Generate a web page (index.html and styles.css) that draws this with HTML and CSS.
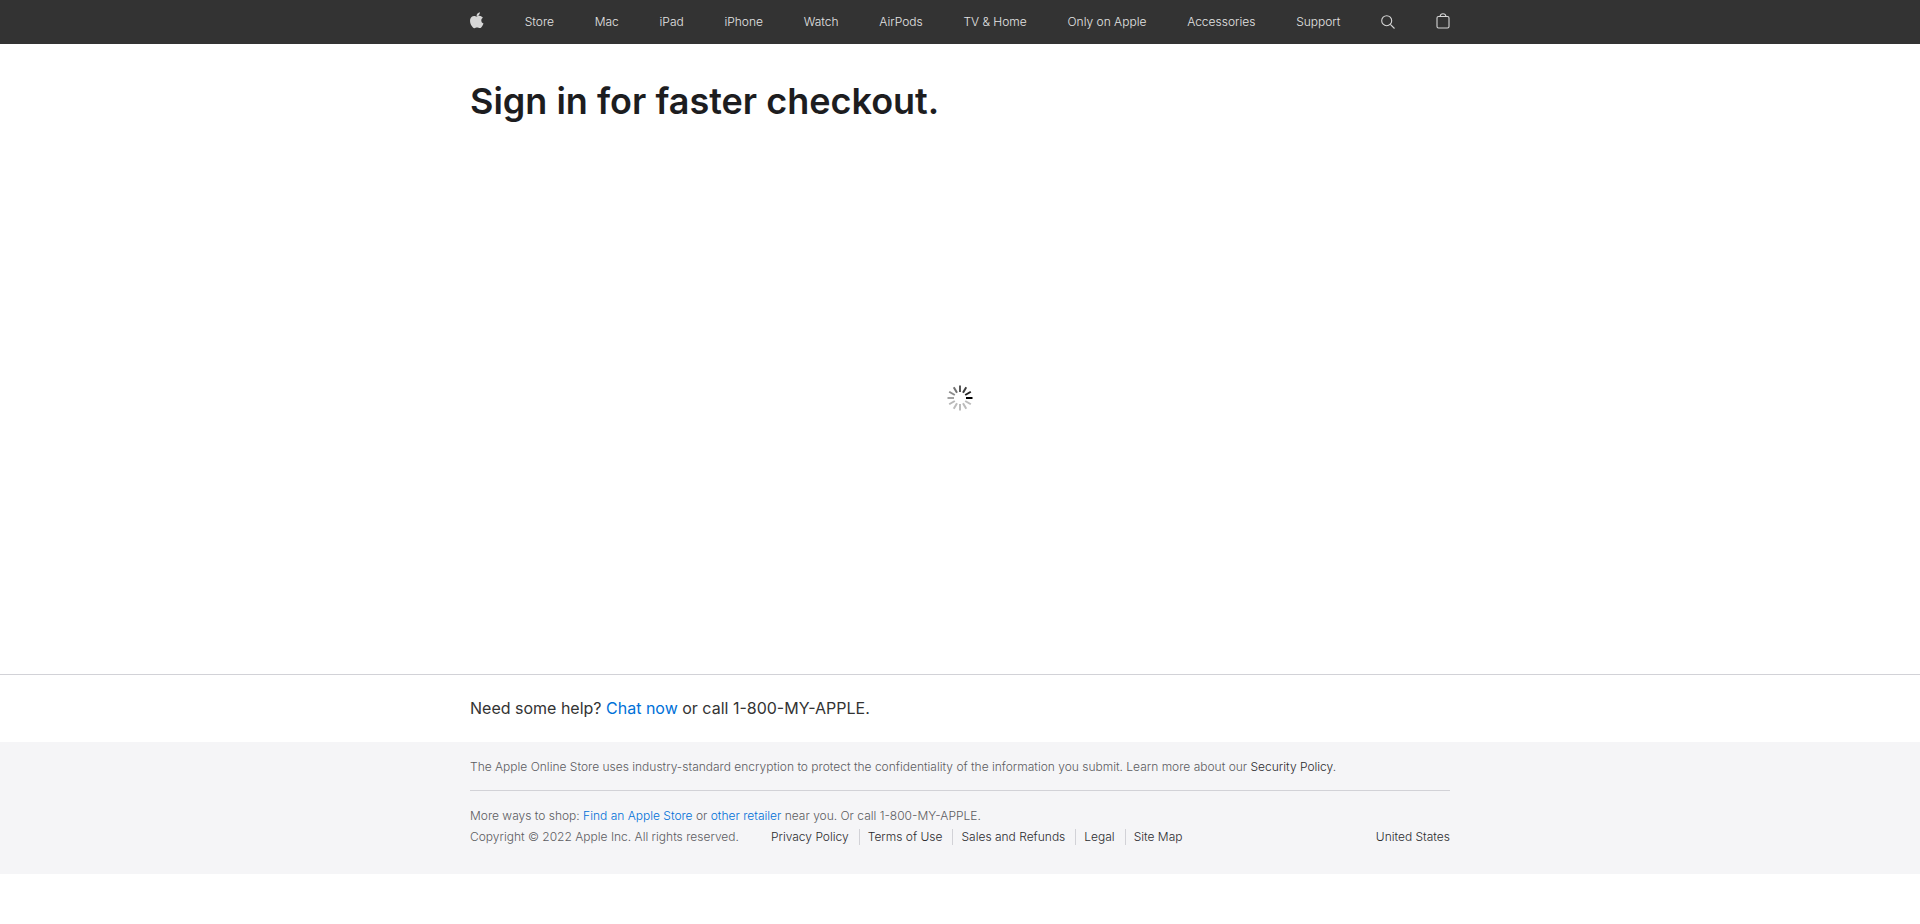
FILE: index.html
```html
<!DOCTYPE html>
<html lang="en">
<head>
<meta charset="utf-8">
<meta name="viewport" content="width=device-width, initial-scale=1">
<title>Sign In - Apple</title>
<link rel="stylesheet" href="styles.css">
</head>
<body>
<header class="globalnav">
  <nav class="container nav-row" aria-label="Global">
    <a class="nav-icon" href="#" aria-label="Apple"><svg class="apple" width="14" height="17" viewBox="0 0 14 17" aria-hidden="true"><path fill="currentColor" d="M9.9.3c.1 1-.3 1.900-.9 2.600-.6.7-1.500 1.200-2.400 1.100-.1-.9.3-1.800.9-2.500C8.100.9 9.100.4 9.900.3zM12.900 5.800c-.9.500-1.600 1.400-1.600 2.700 0 1.500.9 2.600 2.200 3-.3.900-.7 1.700-1.200 2.500-.7 1-1.400 2.100-2.500 2.100s-1.400-.6-2.700-.6-1.700.6-2.700.7c-1.100 0-1.900-1.100-2.600-2.100C.3 12-.7 8.300.7 5.900c.7-1.200 1.900-2 3.300-2 1 0 2 .7 2.700.7.600 0 1.800-.9 3.200-.7.900 0 2.200.4 3 1.900z"/></svg></a>
    <a href="#">Store</a>
    <a href="#">Mac</a>
    <a href="#">iPad</a>
    <a href="#">iPhone</a>
    <a href="#">Watch</a>
    <a href="#">AirPods</a>
    <a href="#">TV &amp; Home</a>
    <a href="#">Only on Apple</a>
    <a href="#">Accessories</a>
    <a href="#">Support</a>
    <a class="nav-icon" href="#" aria-label="Search"><svg width="14" height="14" viewBox="0 0 14 14" fill="none" stroke="currentColor" stroke-width="1.100" aria-hidden="true"><circle cx="5.700" cy="5.700" r="5"/><path d="M9.300 9.300l4.200 4.200"/></svg></a>
    <a class="nav-icon" href="#" aria-label="Shopping Bag"><svg class="bag" width="14" height="16" viewBox="0 0 14 16" fill="none" stroke="currentColor" stroke-width="1.100" aria-hidden="true"><rect x="1" y="3.500" width="12" height="11.500" rx="1.500"/><path d="M4 3.500C4.300 1.800 5.500.8 7 .8s2.700 1 3 2.700"/></svg></a>
  </nav>
</header>
<main class="signin">
  <div class="container signin-body">
    <h1 class="title">Sign in for faster checkout.</h1>
    <div class="loader" role="status" aria-label="Loading">
      <svg width="26" height="26" viewBox="-13 -13 26 26" stroke="#000" stroke-width="2" aria-hidden="true">
        <path d="M6 0H12.500"/>
        <path d="M6 0H12.500" transform="rotate(-30)" opacity=".85"/>
        <path d="M6 0H12.500" transform="rotate(-60)" opacity=".75"/>
        <path d="M6 0H12.500" transform="rotate(-90)" opacity=".65"/>
        <path d="M6 0H12.500" transform="rotate(-120)" opacity=".55"/>
        <path d="M6 0H12.500" transform="rotate(-150)" opacity=".45"/>
        <path d="M6 0H12.500" transform="rotate(180)" opacity=".36"/>
        <path d="M6 0H12.500" transform="rotate(150)" opacity=".28"/>
        <path d="M6 0H12.500" transform="rotate(120)" opacity=".26"/>
        <path d="M6 0H12.500" transform="rotate(90)" opacity=".26"/>
        <path d="M6 0H12.500" transform="rotate(60)" opacity=".26"/>
        <path d="M6 0H12.500" transform="rotate(30)" opacity=".26"/>
      </svg>
    </div>
  </div>
</main>
<section class="help">
  <p class="container help-text">Need some help? <a class="blue" href="#">Chat now</a> or call 1-800-MY-APPLE.</p>
</section>
<footer class="footer">
  <div class="container">
    <p class="footer-note">The Apple Online Store uses industry-standard encryption to protect the confidentiality of the information you submit. Learn more about our <a href="#">Security Policy</a>.</p>
    <p class="footer-shop">More ways to shop: <a class="blue" href="#">Find an Apple Store</a> or <a class="blue" href="#">other retailer</a> near you. Or call 1-800-MY-APPLE.</p>
    <div class="footer-legal">
      <p class="copyright">Copyright © 2022 Apple Inc. All rights reserved.</p>
      <ul class="legal-links">
        <li><a href="#">Privacy Policy</a></li>
        <li><a href="#">Terms of Use</a></li>
        <li><a href="#">Sales and Refunds</a></li>
        <li><a href="#">Legal</a></li>
        <li><a href="#">Site Map</a></li>
      </ul>
      <a class="locale" href="#">United States</a>
    </div>
  </div>
</footer>
</body>
</html>
```
FILE: styles.css
```css
* {
  box-sizing: border-box;
}

body {
  margin: 0;
  min-height: 100vh;
  background: #fff;
  color: #1d1d1f;
  font-family: Inter, "Liberation Sans", sans-serif;
}

h1, p, ul {
  margin: 0;
  padding: 0;
}

a {
  color: inherit;
  text-decoration: none;
}

.container {
  width: 100%;
  max-width: 980px;
  margin: 0 auto;
}

.globalnav {
  background: #333;
  color: #e4e4e4;
}

.nav-row {
  display: flex;
  align-items: center;
  justify-content: space-between;
  height: 44px;
  font-size: 12px;
  font-weight: 300;
  line-height: 16px;
  white-space: nowrap;
}

.nav-icon {
  display: flex;
  color: #d6d6d6;
}

.apple,
.bag {
  margin-bottom: 3px;
}

.signin-body {
  display: flex;
  flex-direction: column;
  min-height: 630px;
  padding-top: 33px;
}

.title {
  font-size: 36px;
  font-weight: 600;
  line-height: 48px;
}

.loader {
  display: flex;
  flex: 1;
  justify-content: center;
  padding-top: 260px;
}

.help {
  padding: 21px 0;
  border-top: 1px solid #d2d2d7;
}

.help-text {
  color: #333;
  font-size: 16px;
  line-height: 25px;
}

.blue {
  color: #0070d8;
}

.footer {
  padding: 17px 0 29px;
  background: #f5f5f7;
  color: #5c5c61;
  font-size: 12px;
  font-weight: 300;
  line-height: 16px;
}

.footer a:not(.blue) {
  color: #2c2c2f;
}

.footer-note {
  padding-bottom: 15px;
  border-bottom: 1px solid #d2d2d7;
}

.footer-shop {
  padding-top: 17px;
}

.footer-legal {
  display: flex;
  align-items: center;
  padding-top: 5px;
}

.copyright {
  margin-right: 32px;
}

.legal-links {
  display: flex;
  list-style: none;
}

.legal-links li {
  margin-right: 8px;
  padding-right: 10px;
  border-right: 1px solid #d2d2d7;
}

.legal-links li:last-child {
  border-right: 0;
}

.locale {
  margin-left: auto;
}
```
